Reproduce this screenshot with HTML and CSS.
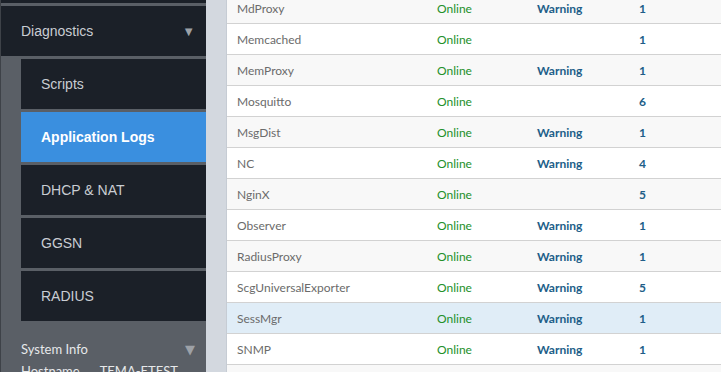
FILE: index.html
```html
<!DOCTYPE html>
<html lang="en">
<head>
  <meta charset="UTF-8" />
  <title>Application Logs</title>
  <link rel="stylesheet" href="styles.css">
</head>
<body>
  <div class="layout">
    <!-- Sidebar -->
    <nav class="sidebar">
      <div class="nav-prev"></div>
      <div class="nav-group">
        <span>Diagnostics</span>
        <span class="caret">&#9660;</span>
      </div>
      <ul class="sub-nav">
        <li>Scripts</li>
        <li class="active">Application Logs</li>
        <li>DHCP &amp; NAT</li>
        <li>GGSN</li>
        <li>RADIUS</li>
      </ul>
      <div class="sys-info">
        <div class="sys-head">
          <span>System Info</span>
          <span class="caret">&#9660;</span>
        </div>
        <div class="sys-row"><span>Hostname</span><span>TEMA-ETEST</span></div>
      </div>
    </nav>

    <div class="gutter"></div>

    <!-- Process table -->
    <main class="content">
      <table class="proc-table">
        <colgroup>
          <col class="c-name"><col class="c-state"><col class="c-alarm"><col>
        </colgroup>
        <tbody>
          <tr><td class="name">MdProxy</td><td class="online">Online</td><td class="warn">Warning</td><td class="count">1</td></tr>
          <tr><td class="name">Memcached</td><td class="online">Online</td><td class="warn"></td><td class="count">1</td></tr>
          <tr><td class="name">MemProxy</td><td class="online">Online</td><td class="warn">Warning</td><td class="count">1</td></tr>
          <tr><td class="name">Mosquitto</td><td class="online">Online</td><td class="warn"></td><td class="count">6</td></tr>
          <tr><td class="name">MsgDist</td><td class="online">Online</td><td class="warn">Warning</td><td class="count">1</td></tr>
          <tr><td class="name">NC</td><td class="online">Online</td><td class="warn">Warning</td><td class="count">4</td></tr>
          <tr><td class="name">NginX</td><td class="online">Online</td><td class="warn"></td><td class="count">5</td></tr>
          <tr><td class="name">Observer</td><td class="online">Online</td><td class="warn">Warning</td><td class="count">1</td></tr>
          <tr><td class="name">RadiusProxy</td><td class="online">Online</td><td class="warn">Warning</td><td class="count">1</td></tr>
          <tr><td class="name">ScgUniversalExporter</td><td class="online">Online</td><td class="warn">Warning</td><td class="count">5</td></tr>
          <tr class="hover"><td class="name">SessMgr</td><td class="online">Online</td><td class="warn">Warning</td><td class="count">1</td></tr>
          <tr><td class="name">SNMP</td><td class="online">Online</td><td class="warn">Warning</td><td class="count">1</td></tr>
          <tr><td class="name">&nbsp;</td><td></td><td></td><td></td></tr>
        </tbody>
      </table>
    </main>
  </div>
</body>
</html>
```

FILE: styles.css
```css
/* Base */
html, body {
  margin: 0;
  height: 100%;
  overflow: hidden;
}

body {
  font-family: 'Liberation Sans', Arial, sans-serif;
  background: #d3d8df;
}

.layout {
  display: grid;
  grid-template-columns: 206px 20px 1fr;
  height: 372px;
}

/* Sidebar */
.sidebar {
  background: #5a5f66;
  display: flex;
  flex-direction: column;
  gap: 3px;
  border-left: 1px solid #3e4248;
}

.nav-prev {
  height: 3px;
  background: #1b2028;
}

.nav-group {
  height: 50px;
  background: #1b2028;
  color: #c9cdd3;
  font-size: 14px;
  display: flex;
  align-items: center;
  justify-content: space-between;
  padding: 0 11px 0 20px;
}

.caret {
  color: #9da1a7;
  font-size: 13px;
}

.sub-nav {
  list-style: none;
  margin: 0;
  padding: 0 0 0 20px;
  display: flex;
  flex-direction: column;
  gap: 3px;
}

.sub-nav li {
  height: 50px;
  background: #1b2028;
  color: #c9cdd3;
  font-size: 14px;
  display: flex;
  align-items: center;
  padding-left: 20px;
}

.sub-nav li.active {
  background: #3a8fdf;
  color: #fff;
  font-weight: 700;
}

.sys-info {
  padding: 15px 11px 0 20px;
  color: #e6e8ea;
  font-family: 'Lato', 'DejaVu Sans', sans-serif;
  font-size: 13px;
}

.sys-head {
  display: flex;
  justify-content: space-between;
  align-items: center;
  height: 20px;
}

.sys-row {
  display: flex;
  gap: 20px;
  margin-top: 4px;
}

/* Content */
.content {
  background: #fff;
  border-left: 1px solid #c6ccd4;
  overflow: hidden;
}

.proc-table {
  width: 100%;
  border-collapse: collapse;
  table-layout: fixed;
  margin-top: -7px;
  font-family: 'Lato', 'DejaVu Sans', sans-serif;
  font-size: 12px;
}

.c-name { width: 200px; }
.c-state { width: 100px; }
.c-alarm { width: 102px; }

.proc-table td {
  height: 30px;
  padding: 0 0 0 10px;
  border-top: 1px solid #d2d2d2;
  white-space: nowrap;
}

.proc-table tr:first-child td {
  border-top: none;
}

.proc-table tr:nth-child(odd) {
  background: #f8f8f8;
}

.proc-table tr.hover {
  background: #e0edf7;
}

.name { color: #6b6b6b; }
.online { color: #23902a; }
.warn { color: #215e88; font-weight: 700; }
.count { color: #215e88; font-weight: 700; }
```
